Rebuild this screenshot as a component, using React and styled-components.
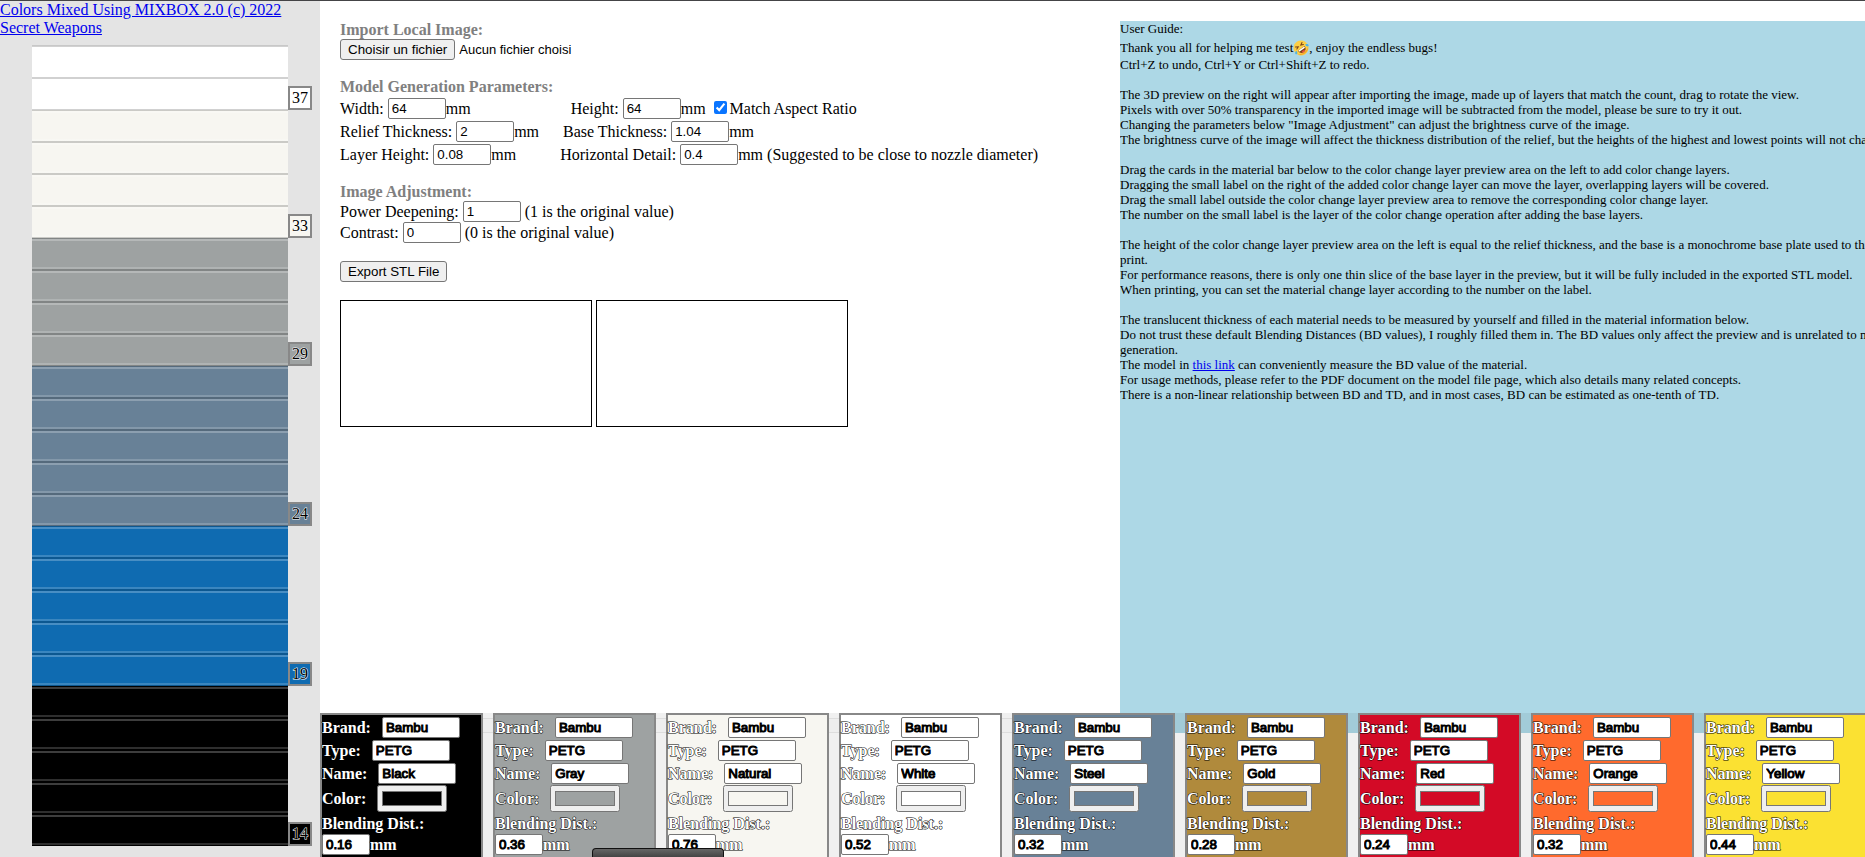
import React, { useRef, useState } from "react";
import styled, { createGlobalStyle } from "styled-components";

const layers = [
  { color: "#ffffff", count: 2, label: 37 },
  { color: "#f7f6f1", count: 4, label: 33 },
  { color: "#9ea2a2", count: 4, label: 29 },
  { color: "#688197", count: 5, label: 24 },
  { color: "#0f6bb1", count: 5, label: 19 },
  { color: "#000000", count: 5, label: 14 },
];

const materials = [
  { name: "Black", color: "#000000", distance: "0.16" },
  { name: "Gray", color: "#9ea2a2", distance: "0.36" },
  { name: "Natural", color: "#f7f6f1", distance: "0.76" },
  { name: "White", color: "#ffffff", distance: "0.52" },
  { name: "Steel", color: "#688197", distance: "0.32" },
  { name: "Gold", color: "#b08a3c", distance: "0.28" },
  { name: "Red", color: "#d30a26", distance: "0.24" },
  { name: "Orange", color: "#ff6a2d", distance: "0.32" },
  { name: "Yellow", color: "#fbe132", distance: "0.44" },
];

const LaughingFace = () => (
  <Emoji viewBox="0 0 32 32" role="img" aria-label="rolling on the floor laughing">
    <g transform="rotate(-35 16 16)">
      <circle cx="16" cy="16" r="15" fill="#fdcf45" />
      <path d="M3 22a15 15 0 0 0 26 0c-6 6-20 6-26 0z" fill="#f2a62c" />
      <path d="M8 17h16c0 6-3 9-8 9s-8-3-8-9z" fill="#7a4318" />
      <path d="M9 17h14v3H9z" fill="#fff" />
      <path d="M12 24c2-2 6-2 8 0-2 2-6 2-8 0z" fill="#ef5148" />
      <path
        d="M8 8l5 3-5 2M24 8l-5 3 5 2"
        fill="none"
        stroke="#7a4318"
        strokeWidth="2"
        strokeLinecap="round"
      />
      <path d="M5 15c-5 1-6 5-4 6s5-1 4-6zM27 15c5 1 6 5 4 6s-5-1-4-6z" fill="#4eb4e8" />
    </g>
  </Emoji>
);

const NumberField = ({ id, label, value, unit, gap = 0 }) => (
  <Field $gap={gap}>
    <label htmlFor={id}>{label}</label>
    <NumberInput id={id} defaultValue={value} inputMode="decimal" />
    {unit}
  </Field>
);

const Layers = () => (
  <Sidebar>
    <a href="https://scrtwpns.com/mixbox">
      Colors Mixed Using MIXBOX 2.0 (c) 2022 Secret Weapons
    </a>
    <LayerList>
      {layers.map(({ color, count, label }) => (
        <LayerGroup key={label}>
          {Array.from({ length: count }, (_, i) => (
            <Layer key={i} $color={color} />
          ))}
          <LayerLabel $color={color}>{label}</LayerLabel>
        </LayerGroup>
      ))}
    </LayerList>
  </Sidebar>
);

const Settings = () => {
  const fileInput = useRef(null);
  const [fileName, setFileName] = useState("Aucun fichier choisi");

  return (
    <Form onSubmit={(e) => e.preventDefault()}>
      <FormBody>
        <Section>
          <Title>Import Local Image:</Title>
          <FileRow>
            <Button type="button" onClick={() => fileInput.current.click()}>
              Choisir un fichier
            </Button>
            <input
              ref={fileInput}
              type="file"
              accept="image/*"
              aria-label="Import Local Image"
              hidden
              onChange={(e) => setFileName(e.target.files[0].name)}
            />
            <span>{fileName}</span>
          </FileRow>
        </Section>
        <Section>
          <Title>Model Generation Parameters:</Title>
          <Row $spaced>
            <NumberField id="width" label="Width:" value="64" unit="mm" />
            <NumberField id="height" label="Height:" value="64" unit="mm" gap={100} />
            <CheckLabel>
              <Checkbox type="checkbox" defaultChecked />
              Match Aspect Ratio
            </CheckLabel>
          </Row>
          <Row $spaced>
            <NumberField id="relief" label="Relief Thickness:" value="2" unit="mm" />
            <NumberField id="base" label="Base Thickness:" value="1.04" unit="mm" gap={24} />
          </Row>
          <Row $spaced>
            <NumberField id="layer" label="Layer Height:" value="0.08" unit="mm" />
            <NumberField
              id="detail"
              label="Horizontal Detail:"
              value="0.4"
              unit="mm (Suggested to be close to nozzle diameter)"
              gap={44}
            />
          </Row>
        </Section>
        <Section>
          <Title>Image Adjustment:</Title>
          <Row>
            <NumberField
              id="power"
              label="Power Deepening:"
              value="1"
              unit={"\u00a0(1 is the original value)"}
            />
          </Row>
          <Row>
            <NumberField
              id="contrast"
              label="Contrast:"
              value="0"
              unit={"\u00a0(0 is the original value)"}
            />
          </Row>
        </Section>
        <Button type="submit">Export STL File</Button>
        <Previews>
          <Preview />
          <Preview />
        </Previews>
      </FormBody>
      <ScrollTrack />
    </Form>
  );
};

const Guide = () => (
  <GuidePanel>
    <p>User Guide:</p>
    <GreetingLine>
      Thank you all for helping me test
      <LaughingFace />, enjoy the endless bugs!
    </GreetingLine>
    <p>Ctrl+Z to undo, Ctrl+Y or Ctrl+Shift+Z to redo.</p>
    <br />
    <p>
      The 3D preview on the right will appear after importing the image, made up
      of layers that match the count, drag to rotate the view.
    </p>
    <p>
      Pixels with over 50% transparency in the imported image will be subtracted
      from the model, please be sure to try it out.
    </p>
    <p>
      Changing the parameters below "Image Adjustment" can adjust the brightness
      curve of the image.
    </p>
    <p>
      The brightness curve of the image will affect the thickness distribution
      of the relief, but the heights of the highest and lowest points will not
      change.
    </p>
    <br />
    <p>
      Drag the cards in the material bar below to the color change layer preview
      area on the left to add color change layers.
    </p>
    <p>
      Dragging the small label on the right of the added color change layer can
      move the layer, overlapping layers will be covered.
    </p>
    <p>
      Drag the small label outside the color change layer preview area to remove
      the corresponding color change layer.
    </p>
    <p>
      The number on the small label is the layer of the color change operation
      after adding the base layers.
    </p>
    <br />
    <p>
      The height of the color change layer preview area on the left is equal to
      the relief thickness, and the base is a monochrome base plate used to
      thicken the
      <br />
      print.
    </p>
    <p>
      For performance reasons, there is only one thin slice of the base layer in
      the preview, but it will be fully included in the exported STL model.
    </p>
    <p>
      When printing, you can set the material change layer according to the
      number on the label.
    </p>
    <br />
    <p>
      The translucent thickness of each material needs to be measured by
      yourself and filled in the material information below.
    </p>
    <p>
      Do not trust these default Blending Distances (BD values), I roughly
      filled them in. The BD values only affect the preview and is unrelated to
      model
      <br />
      generation.
    </p>
    <p>
      The model in <a href="#model">this link</a> can conveniently measure the
      BD value of the material.
    </p>
    <p>
      For usage methods, please refer to the PDF document on the model file
      page, which also details many related concepts.
    </p>
    <p>
      There is a non-linear relationship between BD and TD, and in most cases,
      BD can be estimated as one-tenth of TD.
    </p>
  </GuidePanel>
);

const MaterialCard = ({ name, color, distance }) => (
  <Card $color={color} draggable>
    <CardRow>
      <label htmlFor={`${name}-brand`}>Brand:</label>
      <CardInput id={`${name}-brand`} defaultValue="Bambu" />
    </CardRow>
    <CardRow>
      <label htmlFor={`${name}-type`}>Type:</label>
      <CardInput id={`${name}-type`} defaultValue="PETG" />
    </CardRow>
    <CardRow>
      <label htmlFor={`${name}-name`}>Name:</label>
      <CardInput id={`${name}-name`} defaultValue={name} />
    </CardRow>
    <CardRow>
      <label htmlFor={`${name}-color`}>Color:</label>
      <ColorInput id={`${name}-color`} type="color" defaultValue={color} />
    </CardRow>
    <DistanceLabel htmlFor={`${name}-distance`}>Blending Dist.:</DistanceLabel>
    <DistanceRow>
      <DistanceInput id={`${name}-distance`} defaultValue={distance} />
      mm
    </DistanceRow>
  </Card>
);

const App = () => {
  return (
    <>
      <GlobalStyle />
      <Page>
        <Layers />
        <Main>
          <Workspace>
            <Settings />
            <Guide />
          </Workspace>
          <MaterialBar>
            {materials.map((material) => (
              <MaterialCard key={material.name} {...material} />
            ))}
          </MaterialBar>
        </Main>
        <Popup />
      </Page>
    </>
  );
};

export default App;

const GlobalStyle = createGlobalStyle`
  * {
    box-sizing: border-box;
  }

  body {
    margin: 0;
    overflow: hidden;
    background: white;
    color: black;
    font-family: "Liberation Serif", "Times New Roman", serif;
    font-size: 16px;
    line-height: 18px;
  }

  p {
    margin: 0;
  }

  a {
    color: #0000ee;
  }

  input,
  button {
    font-family: "Liberation Sans", Arial, sans-serif;
  }
`;

const Page = styled.div`
  position: relative;
  display: flex;
  height: 100vh;
  overflow: hidden;
  border-top: 1px solid #444446;
`;

const Sidebar = styled.aside`
  flex: 0 0 320px;
  background: #e4e4e4;
`;

const LayerList = styled.div`
  margin: 8px 32px 0;
  border-top: 1px solid #c8c8c8;
`;

const LayerGroup = styled.div`
  position: relative;
`;

const Layer = styled.div`
  height: 32px;
  background-color: ${(props) => props.$color};
  background-image: linear-gradient(
    rgba(0, 0, 0, 0.18) 1px,
    rgba(255, 255, 255, 0.24) 1px 3px,
    transparent 3px 29px,
    rgba(255, 255, 255, 0.18) 29px 31px,
    rgba(0, 0, 0, 0.18) 31px
  );
`;

const LayerLabel = styled.div`
  position: absolute;
  left: 100%;
  bottom: 0;
  width: 24px;
  height: 24px;
  border: 2px solid #888888;
  background: ${(props) => props.$color};
  color: black;
  text-align: center;
  line-height: 20px;
  -webkit-text-stroke: 1px white;
  paint-order: stroke fill;
`;

const Main = styled.main`
  display: flex;
  flex: 1;
  flex-direction: column;
  min-width: 0;
`;

const Workspace = styled.div`
  display: flex;
  flex: 1;
  min-height: 0;
  padding-top: 20px;
`;

const Form = styled.form`
  display: flex;
  flex: 0 0 800px;
  flex-direction: column;
`;

const FormBody = styled.div`
  flex: 1;
  padding: 0 20px;
`;

const ScrollTrack = styled.div`
  height: 15px;
  border: 1px solid #ebebeb;
  border-width: 1px 0;
  background: #fdfdfd;
`;

const Section = styled.section`
  margin-bottom: 18px;
`;

const Title = styled.div`
  color: gray;
  font-weight: bold;
`;

const Row = styled.div`
  display: flex;
  align-items: center;
  padding-top: ${(props) => (props.$spaced ? "2px" : "0")};
`;

const FileRow = styled(Row)`
  gap: 4px;
  font-family: "Liberation Sans", Arial, sans-serif;
  font-size: 13px;
`;

const Button = styled.button`
  display: block;
  height: 21px;
  padding: 0 7px;
  border: 1px solid #767676;
  border-radius: 3px;
  background: #efefef;
  color: black;
`;

const Field = styled.div`
  display: flex;
  align-items: center;
  margin-left: ${(props) => props.$gap}px;
  white-space: nowrap;
`;

const NumberInput = styled.input`
  width: 58px;
  height: 21px;
  margin-left: 4px;
  padding: 1px 3px;
  border: 1px solid #767676;
  border-radius: 2px;
`;

const CheckLabel = styled.label`
  display: flex;
  align-items: center;
  margin-left: 8px;
`;

const Checkbox = styled.input`
  width: 13px;
  height: 13px;
  margin: 0 3px 2px 0;
  accent-color: #0a75ff;
`;

const Previews = styled.div`
  display: flex;
  gap: 4px;
  margin-top: 18px;
`;

const Preview = styled.canvas`
  width: 252px;
  height: 127px;
  border: 1px solid black;
`;

const GuidePanel = styled.article`
  flex: 1;
  min-width: 0;
  overflow: hidden;
  background: lightblue;
  font-size: 13px;
  line-height: 15px;
  white-space: nowrap;
`;

const GreetingLine = styled.p`
  display: flex;
  align-items: center;
  height: 21px;
  padding-top: 2px;
`;

const Emoji = styled.svg`
  width: 16px;
  height: 16px;
`;

const MaterialBar = styled.div`
  position: relative;
  display: flex;
  flex: 0 0 144px;
  gap: 10px;
  margin-top: -20px;
  overflow: hidden;
  background: rgba(0, 0, 0, 0.06);
`;

const Card = styled.div`
  flex: 0 0 163px;
  height: 150px;
  padding-top: 2px;
  border: 2px solid #888888;
  background: ${(props) => props.$color};
  color: white;
  font-weight: bold;
  -webkit-text-stroke: 1px black;
  paint-order: stroke fill;
`;

const CardRow = styled.div`
  display: flex;
  align-items: center;
  gap: 11px;
  margin-bottom: 2px;
`;

const CardInput = styled.input`
  width: 78px;
  height: 21px;
  padding: 1px 3px;
  border: 1px solid #767676;
  border-radius: 2px;
`;

const ColorInput = styled.input`
  width: 70px;
  height: 27px;
  margin-top: -1px;
`;

const DistanceLabel = styled.label`
  display: block;
  line-height: 20px;
`;

const DistanceRow = styled(CardRow)`
  gap: 0;
`;

const DistanceInput = styled(CardInput)`
  width: 48px;
`;

const Popup = styled.div`
  position: absolute;
  bottom: 0;
  left: 592px;
  width: 132px;
  height: 9px;
  border: 1px solid #111111;
  border-bottom: 0;
  border-radius: 4px 4px 0 0;
  background: linear-gradient(#666666, #444444);
`;
